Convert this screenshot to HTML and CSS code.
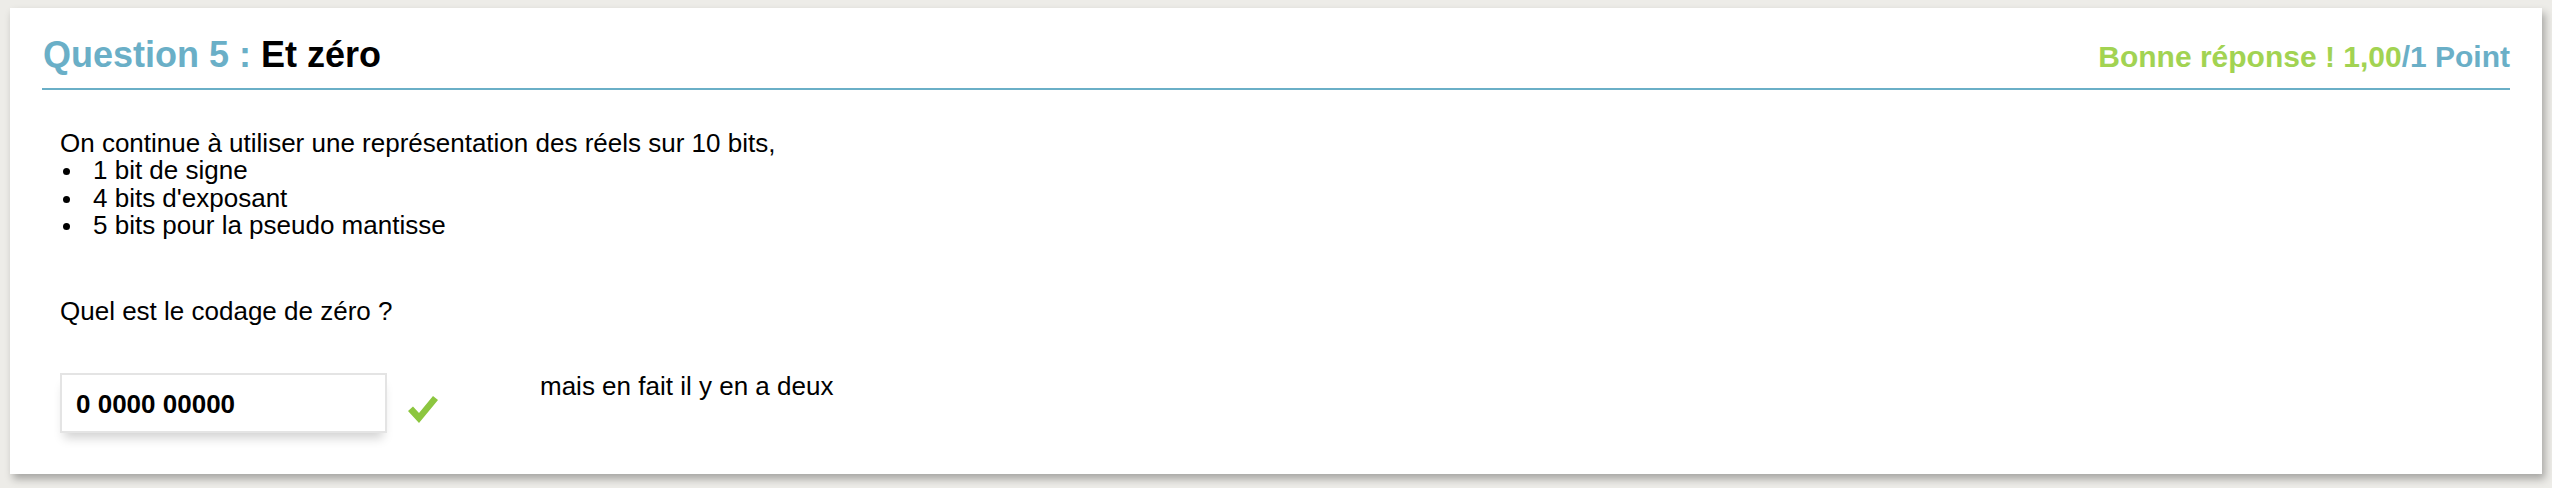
FILE: index.html
```html
<!DOCTYPE html>
<html lang="fr">
<head>
<meta charset="utf-8">
<title>Question 5</title>
<link rel="stylesheet" href="styles.css">
</head>
<body>
<div class="card">
  <div class="head">
    <h2 class="title"><span class="qnum">Question 5 : </span>Et zéro</h2>
    <div class="score"><span class="ok">Bonne réponse ! 1,00</span><span class="pts">/1 Point</span></div>
  </div>
  <div class="body">
    <div class="intro">On continue à utiliser une représentation des réels sur 10 bits,</div>
    <ul class="list">
      <li>1 bit de signe</li>
      <li>4 bits d'exposant</li>
      <li>5 bits pour la pseudo mantisse</li>
    </ul>
    <p class="ask">Quel est le codage de zéro ?</p>
    <div class="answer">
      <div class="field">0 0000 00000</div>
      <svg class="check" width="32" height="30" viewBox="0 0 32 30"><path d="M1 17 L6 12.5 L12 19 L26 2 L31 6 L12 29 Z" fill="#8cc63f"/></svg>
      <div class="comment">mais en fait il y en a deux</div>
    </div>
  </div>
</div>
</body>
</html>
```
FILE: styles.css
```css
html, body { margin: 0; padding: 0; }
body {
  background: #edece8;
  font-family: "Liberation Sans", Arial, sans-serif;
  width: 2552px;
  height: 488px;
  overflow: hidden;
}
.card {
  margin: 8px 0 0 10px;
  width: 2532px;
  height: 466px;
  background: #fff;
  box-shadow: 3px 5px 8px rgba(0,0,0,0.3);
  padding: 0 32px;
  box-sizing: border-box;
}
.head {
  display: flex;
  justify-content: space-between;
  align-items: baseline;
  border-bottom: 2px solid #6aafc7;
  padding-top: 29px;
  height: 51px;
  box-sizing: content-box;
}
.title {
  margin: 0;
  font-size: 36px;
  font-weight: bold;
  color: #000;
  line-height: 36px;
  padding-left: 1px;
}
.qnum { color: #6aafc7; }
.score {
  font-size: 30px;
  font-weight: bold;
  line-height: 36px;
}
.ok { color: #a2d352; }
.pts { color: #6aafc7; }
.body {
  padding: 40px 0 0 18px;
  font-size: 26px;
  line-height: 27.3px;
  color: #000;
}
.list {
  margin: 0;
  padding: 0;
  list-style: none;
}
.list li {
  display: flex;
  align-items: center;
}
.list li::before {
  content: "";
  width: 7px;
  height: 7px;
  border-radius: 50%;
  background: #000;
  margin: 2px 23px 0 3px;
}
.ask { margin: 59px 0 0 0; }
.answer {
  display: flex;
  align-items: flex-start;
  margin-top: 48px;
}
.field {
  width: 327px;
  height: 60px;
  box-sizing: border-box;
  border: 2px solid #e4e4e4;
  box-shadow: 0 9px 10px -4px rgba(0,0,0,0.18);
  font-weight: bold;
  font-size: 26px;
  line-height: 54px;
  padding: 2px 0 0 14px;
}
.check { margin: 21px 0 0 20px; }
.comment { margin: 0 0 0 101px; }
```
